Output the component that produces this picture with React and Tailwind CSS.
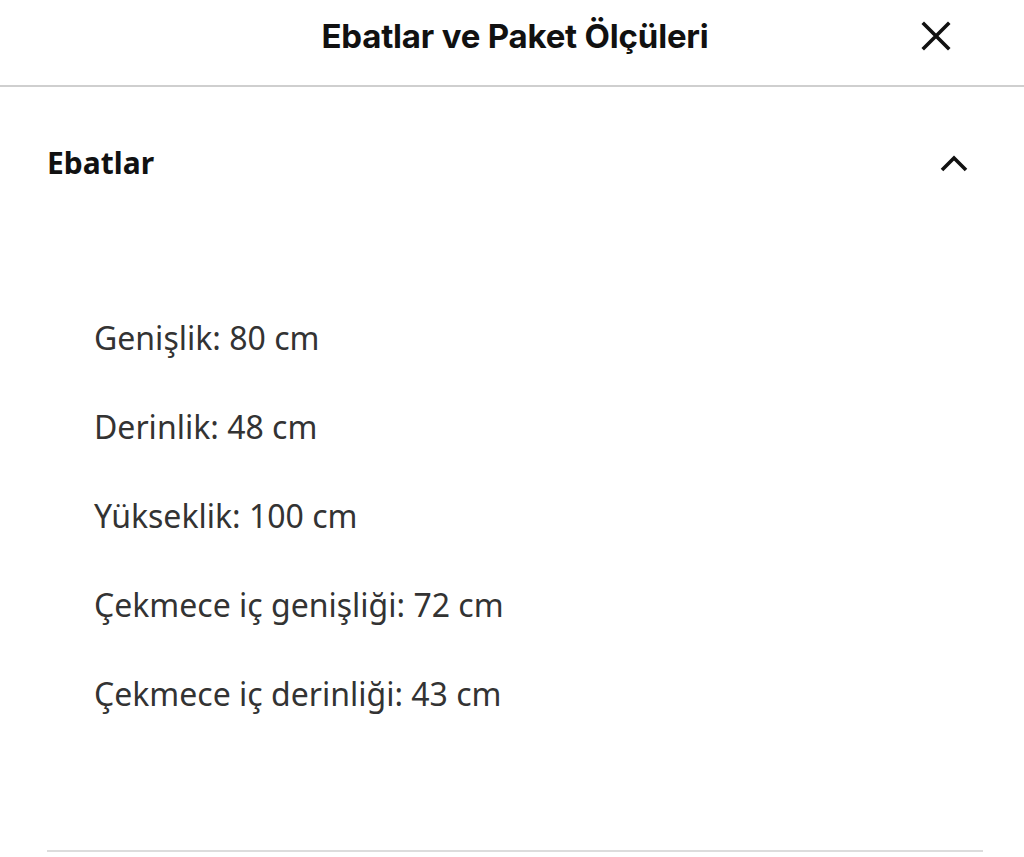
const dims = [
  "Genişlik: 80 cm",
  "Derinlik: 48 cm",
  "Yükseklik: 100 cm",
  "Çekmece iç genişliği: 72 cm",
  "Çekmece iç derinliği: 43 cm",
];

export default function App() {
  return (
    <div className="w-[1024px] h-[857px] bg-white overflow-hidden font-['Noto_Sans',sans-serif]">
      {/* Header */}
      <header className="grid grid-cols-[1fr_auto_1fr] items-center h-[87px] border-b-2 border-[#cfcfcf]">
        <div />
        <h1 className="font-['Inter',sans-serif] font-bold text-[33px] leading-none text-[#111] tracking-[-0.2px] pl-[6px] pb-[13px]">
          Ebatlar ve Paket Ölçüleri
        </h1>
        <div className="flex justify-end pr-[73px] pb-[13px]">
          <button type="button" aria-label="Kapat">
            <svg width="30" height="30" viewBox="0 0 30 30" fill="none" stroke="#111" strokeWidth="3.6" strokeLinecap="square">
              <path d="M3 3 L27 27 M27 3 L3 27" />
            </svg>
          </button>
        </div>
      </header>

      {/* Accordion */}
      <section className="ml-[47px] mr-[41px] border-b-2 border-[#dcdcdc]">
        <div className="flex items-center justify-between h-[40px] mt-[56px] pr-[15px]">
          <h2 className="text-[30px] font-bold text-[#111] leading-[40px]">Ebatlar</h2>
          <svg width="28" height="18" viewBox="0 0 28 18" fill="none" stroke="#111" strokeWidth="3.6">
            <path d="M2 16 L14 4 L26 16" />
          </svg>
        </div>
        <ul className="flex flex-col gap-[49px] pl-[47px] mt-[135px] mb-[136px]">
          {dims.map((d) => (
            <li key={d} className="text-[32px] leading-[40px] text-[#333]">
              {d}
            </li>
          ))}
        </ul>
      </section>
    </div>
  );
}
